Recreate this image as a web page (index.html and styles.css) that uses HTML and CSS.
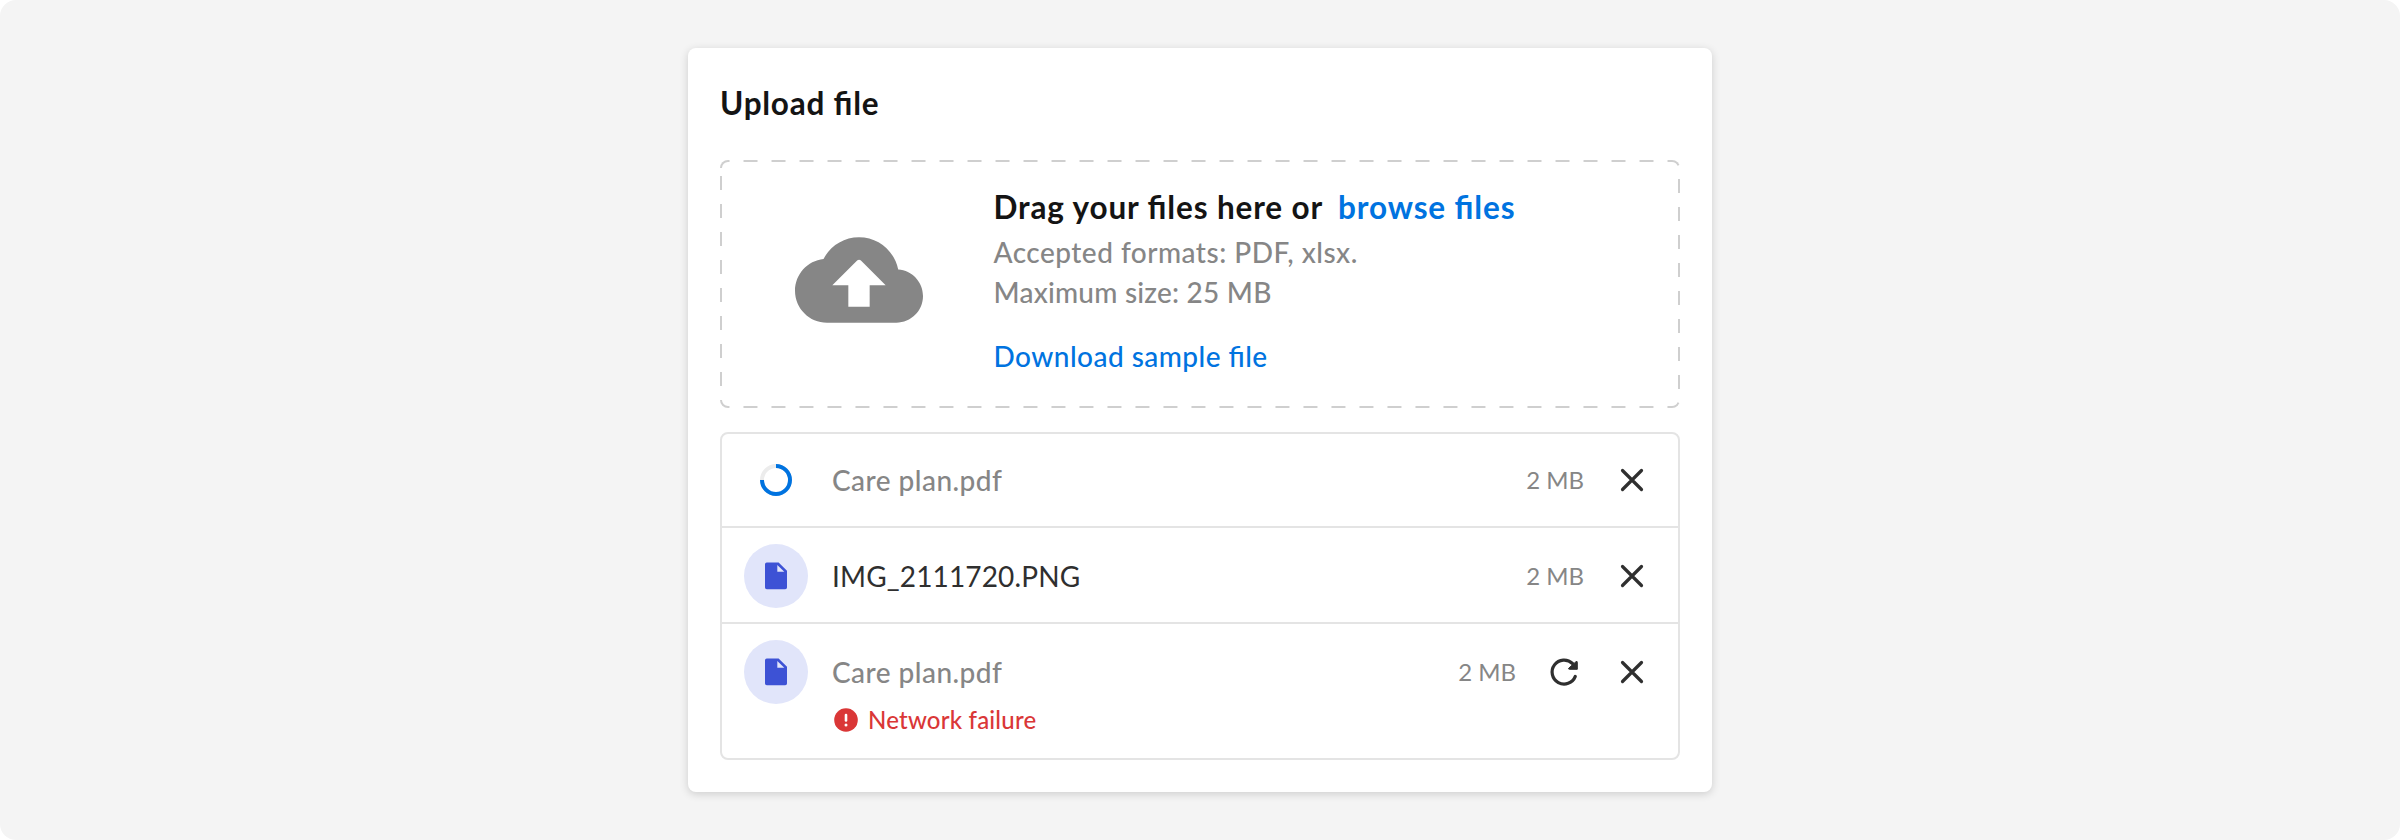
FILE: index.html
```html
<!DOCTYPE html>
<html lang="en">
<head>
<meta charset="utf-8">
<title>Upload file</title>
<link rel="stylesheet" href="styles.css">
</head>
<body>
<svg class="sprite" aria-hidden="true">
  <symbol id="close" viewBox="0 0 32 32"><path d="M6.500 6.500 25.500 25.500M25.500 6.500 6.500 25.500" fill="none" stroke="currentColor" stroke-width="3.200" stroke-linecap="round"/></symbol>
  <symbol id="doc" viewBox="0 0 32 32"><path d="M6.800 2.500h11.800L27 10.700V27.500a1.800 1.800 0 0 1-1.800 1.800H6.800A1.800 1.800 0 0 1 5 27.500V4.300A1.800 1.800 0 0 1 6.800 2.500z" fill="#3d52d5"/><path d="M17.300 5v6.800h7z" fill="#e1e5fa"/></symbol>
</svg>
<main class="page">
  <section class="card">
    <h1 class="title">Upload file</h1>
    <div class="dropzone">
      <svg class="dashes" viewBox="0 0 960 248"><path d="M0 8A8 8 0 0 1 8 0H952A8 8 0 0 1 960 8V240A8 8 0 0 1 952 248H8A8 8 0 0 1 0 240Z" fill="none" stroke="#cfcfcf" stroke-width="4" stroke-dasharray="14"/></svg>
      <svg class="cloud" viewBox="0 0 24 24"><path fill="#868686" d="M19.350 10.040C18.670 6.590 15.640 4 12 4 9.110 4 6.600 5.640 5.350 8.040 2.340 8.360 0 10.910 0 14c0 3.310 2.690 6 6 6h13c2.760 0 5-2.240 5-5 0-2.640-2.050-4.780-4.650-4.960zM14 13v4h-4v-4H7l4.650-4.650c.2-.2.510-.2.710 0L17 13h-3z"/></svg>
      <div class="info">
        <p class="lead"><span>Drag your files here or</span><a>browse files</a></p>
        <p class="hint formats">Accepted formats: PDF, xlsx.</p>
        <p class="hint limit">Maximum size: 25 MB</p>
        <a class="sample">Download sample file</a>
      </div>
    </div>
    <ul class="files">
      <li class="row first">
        <span class="thumb"><svg class="spinner" viewBox="0 0 32 32"><circle cx="16" cy="16" r="14" fill="none" stroke="#ececec" stroke-width="4"/><path d="M16 2A14 14 0 1 1 2 16" fill="none" stroke="#0073e0" stroke-width="4"/></svg></span>
        <div class="meta"><span class="name muted">Care plan.pdf</span></div>
        <span class="size">2 MB</span>
        <svg class="icon"><use href="#close"/></svg>
      </li>
      <li class="row">
        <span class="thumb disc"><svg class="icon"><use href="#doc"/></svg></span>
        <div class="meta"><span class="name">IMG_2111720.PNG</span></div>
        <span class="size">2 MB</span>
        <svg class="icon"><use href="#close"/></svg>
      </li>
      <li class="row last">
        <span class="thumb disc"><svg class="icon"><use href="#doc"/></svg></span>
        <div class="meta">
          <span class="name muted">Care plan.pdf</span>
          <span class="error"><svg class="alert" viewBox="0 0 24 24"><circle cx="12" cy="12" r="11.800" fill="#da3737"/><path d="M12 7v5.500" stroke="#fff" stroke-width="2.600" stroke-linecap="round"/><circle cx="12" cy="17" r="1.500" fill="#fff"/></svg><span class="reason">Network failure</span></span>
        </div>
        <span class="size">2 MB</span>
        <svg class="icon" viewBox="0 0 32 32"><path d="M27.300 20.400A12 12 0 1 1 24.500 7.500" fill="none" stroke="#2f2f2f" stroke-width="3.200" stroke-linecap="round"/><path d="M28 5.700Q29.300 4.800 29.300 6.300v7H21.500q-1.500 0-.6-1.300z" fill="#2f2f2f" stroke="#2f2f2f" stroke-width="1" stroke-linejoin="round"/></svg>
        <svg class="icon after-retry"><use href="#close"/></svg>
      </li>
    </ul>
  </section>
</main>
</body>
</html>
```
FILE: styles.css
```css
* { box-sizing: border-box; }
body { margin: 0; background: #fff; font-family: Lato, "Open Sans", sans-serif; color: #2f2f2f; font-feature-settings: "liga" 1; }
h1, p, ul { margin: 0; padding: 0; }
.sprite { display: none; }
svg { display: block; flex: none; }
.page { height: 840px; border-radius: 16px; background: #f4f4f4; display: flex; align-items: center; justify-content: center; }
.card { width: 1024px; height: 744px; padding: 32px; background: #fff; border-radius: 8px; box-shadow: 0 2px 8px rgba(0, 0, 0, .16); }
.title { height: 48px; margin-bottom: 32px; font-size: 31.500px; line-height: 46px; letter-spacing: .76px; font-weight: 700; color: #141414; }
.dropzone { position: relative; height: 248px; margin-bottom: 24px; padding: 0 32px 0 75px; display: flex; align-items: center; }
.dashes { position: absolute; inset: 0; width: 960px; height: 248px; border-radius: 8px; overflow: hidden; }
.cloud { width: 128px; height: 128px; margin-top: -8px; }
.info { align-self: flex-start; margin-left: 70.500px; padding-top: 23px; white-space: nowrap; }
.lead { display: flex; gap: 15px; height: 49px; font-size: 31.500px; line-height: 48px; letter-spacing: .86px; font-weight: 700; color: #141414; }
.lead a, .sample { color: #0073e0; }
.hint { font-size: 28px; line-height: 40px; font-weight: 500; color: #868686; }
.formats { letter-spacing: .48px; }
.limit { letter-spacing: .22px; }
.sample { display: block; margin-top: 24px; font-size: 28px; line-height: 40px; letter-spacing: .46px; font-weight: 500; }
.files { list-style: none; height: 328px; border: 2px solid #e4e4e4; border-radius: 8px; }
.row { display: flex; align-items: flex-start; height: 96px; padding: 16px 30px 14px 22px; border-bottom: 2px solid #e4e4e4; }
.row.first { height: 94px; padding-top: 14px; }
.row.last { height: 134px; border-bottom: 0; }
.thumb { flex: none; width: 64px; height: 64px; display: flex; align-items: center; justify-content: center; border-radius: 50%; }
.disc { background: #e1e5fa; }
.spinner { width: 32px; height: 32px; }
.icon { width: 32px; height: 32px; color: #2f2f2f; }
.row > .icon { margin: 16px 0 0 32px; }
.row > .after-retry { margin-left: 36px; }
.meta { flex: 1; margin-left: 24px; display: flex; flex-direction: column; white-space: nowrap; }
.name { font-size: 28px; line-height: 64px; letter-spacing: .15px; }
.name.muted { letter-spacing: .46px; font-weight: 500; }
.muted, .size { color: #868686; }
.size { font-size: 24px; line-height: 63px; }
.error { display: flex; align-items: center; gap: 10px; height: 32px; padding-left: 2px; font-size: 24px; letter-spacing: .2px; font-weight: 500; color: #da3737; }
.reason { padding-bottom: 2px; }
.alert { width: 24px; height: 24px; }
```
